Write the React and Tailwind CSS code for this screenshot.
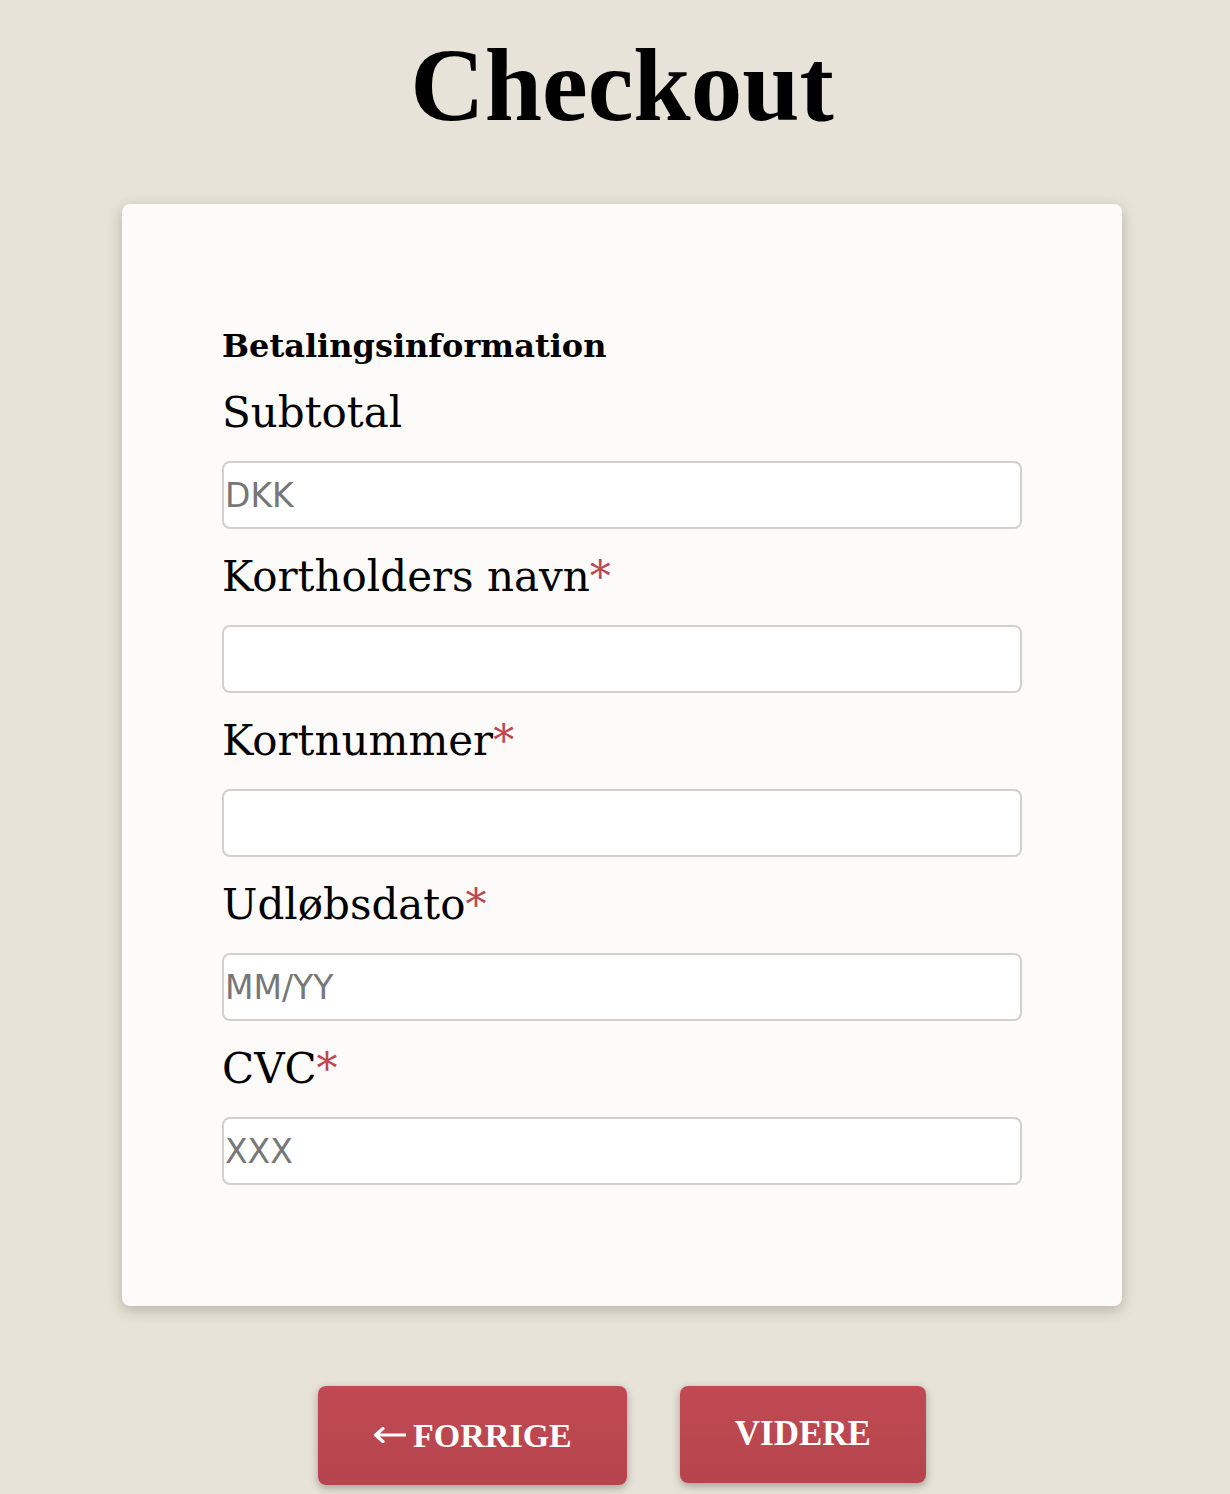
import { useState } from "react";

const fields = [
  { key: "subtotal", label: "Subtotal", placeholder: "DKK" },
  { key: "name", label: "Kortholders navn", required: true },
  { key: "number", label: "Kortnummer", required: true },
  { key: "expiry", label: "Udløbsdato", required: true, placeholder: "MM/YY" },
  { key: "cvc", label: "CVC", required: true, placeholder: "XXX" },
];

export default function App() {
  const [values, setValues] = useState({});

  return (
    <div className="min-h-[1494px] bg-[#e7e3d8] pb-[10px] pl-[14px]">
      {/* Title */}
      <h1 className="pt-[20px] h-[204px] text-center font-['Liberation_Serif',serif] text-[103px] font-bold leading-[130px] text-black">
        Checkout
      </h1>

      {/* Card */}
      <div className="mx-auto w-[1000px] rounded-[8px] bg-[#fcfbf9] px-[100px] pt-[122px] pb-[121px] shadow-[0_4px_14px_rgba(60,50,30,0.28)]">
        <h2 className="font-['DejaVu_Serif',serif] text-[32px] font-bold leading-[40px] text-black">
          Betalingsinformation
        </h2>

        <div className="mt-[-1px]">
          {fields.map((f) => (
            <div key={f.key}>
              <label className="my-[23px] block font-['DejaVu_Serif',serif] text-[42px] leading-[50px] text-black">
                {f.label}
                {f.required ? <span className="text-[#c0464f]">*</span> : null}
              </label>
              <input
                value={values[f.key] || ""}
                onChange={(e) => setValues({ ...values, [f.key]: e.target.value })}
                placeholder={f.placeholder}
                className="
                  block w-full h-[68px]
                  bg-white
                  border-2 border-[#d2d0cd]
                  rounded-[8px]
                  px-[1px]
                  font-['DejaVu_Sans',sans-serif] text-[33px]
                  placeholder:text-[#777]
                  outline-none
                "
              />
            </div>
          ))}
        </div>
      </div>

      {/* Buttons */}
      <div className="mt-[80px] flex justify-center gap-[53px]">
        <button
          type="button"
          className="flex h-[99px] items-center gap-[7px] rounded-[8px] bg-gradient-to-b from-[#c04a53] to-[#b6444c] px-[55px] font-['Liberation_Serif',serif] text-[34px] font-bold text-white shadow-[0_3px_8px_rgba(0,0,0,0.3)]"
        >
          <svg width="33" height="16" viewBox="0 0 33 16" fill="none" className="mt-[-2px]">
            <path d="M32 8H3M10 1.5L2.5 8L10 14.5" stroke="white" strokeWidth="3.2" strokeLinecap="round" strokeLinejoin="round" />
          </svg>
          FORRIGE
        </button>
        <button
          type="button"
          className="h-[97px] rounded-[8px] bg-gradient-to-b from-[#c04a53] to-[#b6444c] px-[55px] font-['Liberation_Serif',serif] text-[35px] font-bold text-white shadow-[0_3px_8px_rgba(0,0,0,0.3)]"
        >
          VIDERE
        </button>
      </div>
    </div>
  );
}
